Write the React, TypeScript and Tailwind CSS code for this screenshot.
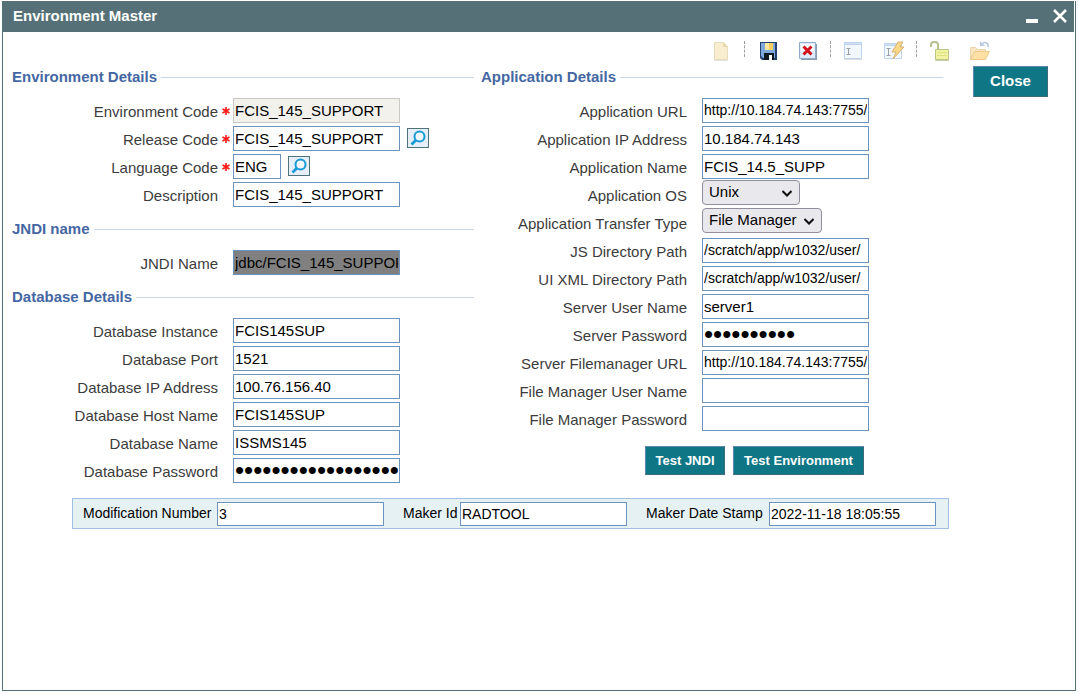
import type { ReactNode } from "react";

type FieldProps = {
  id: string;
  label: string;
  value?: string;
  type?: string;
  required?: boolean;
  textClass?: string;
  inputClass?: string;
  children?: ReactNode;
};

const INPUT = "border px-px text-black outline-none";
const NORMAL = "w-[167px] border-[#6b93bd] bg-white";
const LONG_TEXT = "text-[14px]";
const BUTTON = "border border-[#5f86ad] border-r-[#3f6a7d] border-b-[#3f6a7d] bg-[#0f7685] font-bold text-white";

const databaseFields = [
  { id: "db-instance", label: "Database Instance", value: "FCIS145SUP" },
  { id: "db-port", label: "Database Port", value: "1521" },
  { id: "db-ip", label: "Database IP Address", value: "100.76.156.40" },
  { id: "db-host", label: "Database Host Name", value: "FCIS145SUP" },
  { id: "db-name", label: "Database Name", value: "ISSMS145" },
  { id: "db-password", label: "Database Password", value: "databasepassword12345", type: "password" },
];

const serverFields = [
  { id: "js-path", label: "JS Directory Path", value: "/scratch/app/w1032/user/", textClass: LONG_TEXT },
  { id: "xml-path", label: "UI XML Directory Path", value: "/scratch/app/w1032/user/", textClass: LONG_TEXT },
  { id: "server-user", label: "Server User Name", value: "server1" },
  { id: "server-password", label: "Server Password", value: "password10", type: "password" },
  { id: "fm-url", label: "Server Filemanager URL", value: "http://10.184.74.143:7755/", textClass: LONG_TEXT },
  { id: "fm-user", label: "File Manager User Name", value: "" },
  { id: "fm-password", label: "File Manager Password", value: "", type: "password" },
];

function FieldLabel({ id, label, required }: { id: string; label: string; required?: boolean }) {
  return (
    <>
      <label htmlFor={id} className="w-[206px] shrink-0 pt-1 text-right text-[15px] leading-6 whitespace-nowrap text-[#3c3c3c]">
        {label}
      </label>
      <span className="flex w-[15px] shrink-0 items-center pt-0.5 pl-1">
        {required && (
          <svg width="8" height="8" viewBox="0 0 8 8" stroke="#ff1a1a" strokeWidth="1.6" aria-hidden="true">
            <path d="M4 0v8M.5 2l7 4M7.5 2l-7 4" />
          </svg>
        )}
      </span>
    </>
  );
}

function Field({ id, label, value = "", type = "text", required, textClass = "text-[15px]", inputClass = NORMAL, children }: FieldProps) {
  // the masking dots are drawn from a larger size than the normal text
  const size = type === "password" ? "text-[26px] leading-none" : textClass;
  return (
    <div className="flex h-7 items-center">
      <FieldLabel id={id} label={label} required={required} />
      <input id={id} type={type} defaultValue={value} required={required} className={`${INPUT} h-[25px] ${size} ${inputClass}`} />
      {children}
    </div>
  );
}

function SelectField({ id, label, options, width }: { id: string; label: string; options: string[]; width: string }) {
  return (
    <div className="flex h-7 items-start">
      <FieldLabel id={id} label={label} />
      <div className={`relative ${width}`}>
        <select id={id} className="h-[25px] w-full appearance-none rounded border border-[#8f8f9d] bg-[#e9e9ed] pl-1.5 text-[15px] text-black">
          {options.map((o) => (
            <option key={o}>{o}</option>
          ))}
        </select>
        <svg className="pointer-events-none absolute top-2 right-2" width="10" height="10" viewBox="0 0 10 10" fill="none" stroke="#111" strokeWidth="2" aria-hidden="true">
          <path d="M.5 3L5 7.5 9.5 3" />
        </svg>
      </div>
    </div>
  );
}

function Section({ title, children }: { title: string; children: ReactNode }) {
  return (
    <section>
      <div className="mb-[9px] flex h-5 items-center gap-1">
        <h2 className="text-[15px] leading-5 font-bold whitespace-nowrap text-[#4467a3]">{title}</h2>
        <div className="h-px flex-1 bg-[#c9d6ec]" />
      </div>
      {children}
    </section>
  );
}

function LookupButton({ label }: { label: string }) {
  return (
    <button type="button" aria-label={label} className="ml-[7px] flex h-5 w-[22px] items-center justify-center border border-[#4f7178] bg-[#e6eef9]">
      <svg width="18" height="18" viewBox="0 0 18 18" fill="none" stroke="#169bd7" aria-hidden="true">
        <circle cx="10.5" cy="7.5" r="5" strokeWidth="2" fill="#f4f9ff" />
        <path d="M7 11l-4.5 4.5" strokeWidth="2.8" />
      </svg>
    </button>
  );
}

function ToolButton({ label, children }: { label: string; children: ReactNode }) {
  return (
    <button type="button" aria-label={label} className="h-5 w-5">
      <svg width="20" height="20" viewBox="0 0 20 20" fill="none" aria-hidden="true">
        {children}
      </svg>
    </button>
  );
}

function Separator() {
  return <div className="h-4 w-0.5 border-l border-dashed border-[#a0a0a0]" />;
}

function Toolbar() {
  return (
    <div className="flex h-[34px] items-start justify-end gap-3 pt-[9px] pr-[85px]">
      <ToolButton label="New">
        <path d="M2.5 1.5h9l4 4v13h-13z" fill="#f8edcf" stroke="#e6dcc0" />
        <path d="M11.5 1.5v4h4z" fill="#e9dab0" stroke="#e6d9b5" />
        <path d="M2 19.5h14" stroke="#e0e0e0" />
      </ToolButton>
      <Separator />
      <div className="flex gap-5">
        <ToolButton label="Save">
          <path d="M2 1h17v18H4l-2-2z" fill="#23406e" />
          <path d="M3 2h14v15H5l-2-2z" fill="#7ea8dc" />
          <path d="M7 2h8v7H7z" fill="#fbe7a0" />
          <path d="M11 2h4v7h-4z" fill="#f5cf5c" />
          <path d="M6 12h10v7H6z" fill="#101820" />
          <path d="M11 14h3v5h-3z" fill="#fff" />
        </ToolButton>
        <ToolButton label="Delete">
          <path d="M3 3h16v16H3z" fill="#8c9aab" />
          <path d="M1.5 1.5h16v16h-16z" fill="#dfebf8" stroke="#8fa9c8" />
          <path d="M3 3h13v7H3z" fill="#f7fbff" />
          <path d="M5.5 5.5l8 8M13.5 5.5l-8 8" stroke="#d3121c" strokeWidth="3" />
        </ToolButton>
      </div>
      <Separator />
      <div className="flex gap-5">
        <ToolButton label="Enter query">
          <path d="M.5 1.5h17v16H.5z" fill="#f3f8fe" stroke="#bfd3ee" />
          <path d="M.5 1.5h17v2H.5z" fill="#cfe0f6" stroke="#bfd3ee" />
          <path d="M2.5 7.5h4M2.5 13.5h4M4.5 7.5v6" stroke="#98a0aa" />
          <path d="M0 18.5h18" stroke="#dcdcdc" />
        </ToolButton>
        <ToolButton label="Execute query">
          <path d="M.5 2.5h17v15H.5z" fill="#f3f8fe" stroke="#bfd3ee" />
          <path d="M.5 2.5h17v2H.5z" fill="#cfe0f6" stroke="#bfd3ee" />
          <path d="M2.5 7.5h4M2.5 14.5h4M4.5 7.5v7" stroke="#98a0aa" />
          <path d="M14 1h5l-3 5h4L9 18l3-7H8z" fill="#f9d988" stroke="#d8b274" />
        </ToolButton>
      </div>
      <Separator />
      <div className="flex gap-5">
        <ToolButton label="Unlock">
          <path d="M1 6V4a3 3 0 0 1 3-3h1a3 3 0 0 1 3 3v5" stroke="#b8c093" strokeWidth="2" />
          <path d="M5.5 8.5h13v10h-13z" fill="#f1f3a0" stroke="#bcc487" />
          <path d="M7 11.5h10M7 14.5h10" stroke="#dde184" />
          <path d="M5 19.5h14" stroke="#c9cea8" />
        </ToolButton>
        <ToolButton label="Open">
          <path d="M.5 18.5v-12h5l2 2h8v10z" fill="#f8e7c2" stroke="#ead4a8" />
          <path d="M.5 18.5l4-8h15l-4 8z" fill="#ffe1a6" stroke="#efc98a" />
          <path d="M18 6c1-4-3-6-6-3" stroke="#b6c5d8" strokeWidth="1.5" />
          <path d="M10 0v5h5z" fill="#bccbdd" />
        </ToolButton>
      </div>
    </div>
  );
}

function AuditField({ id, label, value, labelWidth }: { id: string; label: string; value: string; labelWidth: string }) {
  return (
    <div className="flex items-start">
      <label htmlFor={id} className={`${labelWidth} text-[14px] leading-6 whitespace-nowrap text-black`}>{label}</label>
      <input id={id} defaultValue={value} className={`${INPUT} ${NORMAL} mt-px h-6 text-[14px]`} />
    </div>
  );
}

export default function App() {
  return (
    <div className="flex min-h-screen flex-col bg-white pt-px pr-[3px] pb-[3px] pl-0.5 font-['Liberation_Sans',Arial,sans-serif]">
      <main className="flex flex-1 flex-col border border-t-0 border-[#557177]">
        {/* Title bar */}
        <header className="mr-px flex h-[31px] items-center justify-between bg-[#557177] pr-1.5 pb-0.5 pl-2.5 text-white">
          <h1 className="text-[15px] leading-5 font-bold">Environment Master</h1>
          <div className="flex gap-3">
            <button type="button" aria-label="Minimize">
              <svg width="14" height="16" viewBox="0 0 14 16" fill="#fff" aria-hidden="true">
                <path d="M0 11h12v4H0z" />
              </svg>
            </button>
            <button type="button" aria-label="Close window">
              <svg width="16" height="16" viewBox="0 0 16 16" stroke="#fff" strokeWidth="2.5" aria-hidden="true">
                <path d="M2 2l12 12M14 2L2 14" />
              </svg>
            </button>
          </div>
        </header>

        <Toolbar />

        <form className="pr-[27px] pl-[9px]">
          <div className="flex items-start gap-[30px]">
            <div className="grid flex-1 grid-cols-2 gap-[7px] pt-px">
              <div className="flex min-w-0 flex-col gap-[11px]">
                <Section title="Environment Details">
                  <Field id="env-code" label="Environment Code" value="FCIS_145_SUPPORT" required inputClass="w-[167px] border-[#c8c8c4] bg-[#f2f1ec]" />
                  <Field id="release-code" label="Release Code" value="FCIS_145_SUPPORT" required>
                    <LookupButton label="Find release code" />
                  </Field>
                  <Field id="language-code" label="Language Code" value="ENG" required inputClass="w-12 border-[#6b93bd] bg-white">
                    <LookupButton label="Find language code" />
                  </Field>
                  <Field id="description" label="Description" value="FCIS_145_SUPPORT" />
                </Section>
                <Section title="JNDI name">
                  <Field id="jndi-name" label="JNDI Name" value="jdbc/FCIS_145_SUPPORT" inputClass="w-[167px] border-[#6b93bd] bg-[#808080]" />
                </Section>
                <Section title="Database Details">
                  {databaseFields.map((f) => (
                    <Field key={f.id} {...f} />
                  ))}
                </Section>
              </div>

              <div className="min-w-0">
                <Section title="Application Details">
                  <Field id="app-url" label="Application URL" value="http://10.184.74.143:7755/" textClass={LONG_TEXT} />
                  <Field id="app-ip" label="Application IP Address" value="10.184.74.143" />
                  <Field id="app-name" label="Application Name" value="FCIS_14.5_SUPP" />
                  <SelectField id="app-os" label="Application OS" options={["Unix", "Windows"]} width="w-[98px]" />
                  <SelectField id="transfer-type" label="Application Transfer Type" options={["File Manager", "FTP"]} width="w-[120px]" />
                  {serverFields.map((f) => (
                    <Field key={f.id} {...f} />
                  ))}
                </Section>
                <div className="mt-3.5 ml-[164px] flex gap-2">
                  <button type="button" className={`${BUTTON} h-[29px] w-20 text-[13px]`}>Test JNDI</button>
                  <button type="button" className={`${BUTTON} h-[29px] w-[131px] text-[13px]`}>Test Environment</button>
                </div>
              </div>
            </div>

            <button type="button" className={`${BUTTON} h-[31px] w-[75px] text-[15px]`}>Close</button>
          </div>

          {/* Audit strip */}
          <div className="mt-3.5 mr-[99px] ml-[60px] flex h-[31px] items-center justify-between border border-[#a0bfe3] bg-[#e6f1f4] pr-3 pl-2.5">
            <AuditField id="mod-number" label="Modification Number" value="3" labelWidth="w-[134px]" />
            <AuditField id="maker-id" label="Maker Id" value="RADTOOL" labelWidth="w-[57px]" />
            <AuditField id="maker-date" label="Maker Date Stamp" value="2022-11-18 18:05:55" labelWidth="w-[123px]" />
          </div>
        </form>
      </main>
    </div>
  );
}
